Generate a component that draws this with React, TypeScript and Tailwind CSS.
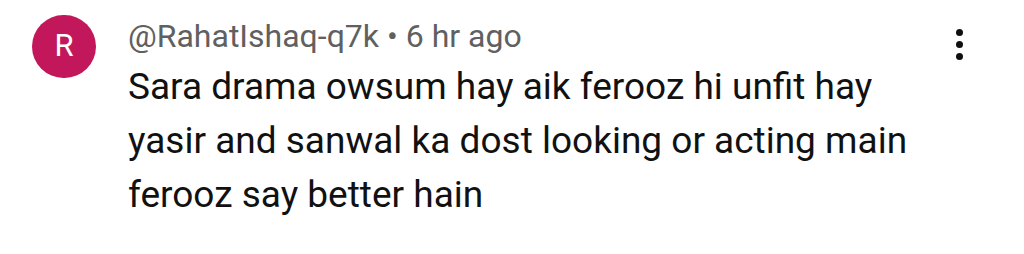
import React from "react";

export default function App() {
  return (
    <div className="w-[1024px] h-[254px] bg-white flex items-start pl-[32px] pt-[15px] pr-[61px]" style={{ fontFamily: "Roboto, sans-serif" }}>
      <div className="w-[64px] h-[63px] rounded-full bg-[#c2185b] flex items-center justify-center text-white text-[31px] shrink-0">R</div>
      <div className="flex-1 ml-[32px] mt-[2px]">
        <div className="text-[32px] leading-[38px] text-[#606060]">@RahatIshaq-q7k • 6 hr ago</div>
        <div className="text-[37px] leading-[54px] text-[#111111] mt-[5px]">
          Sara drama owsum hay aik ferooz hi unfit hay<br />
          yasir and sanwal ka dost looking or acting main<br />
          ferooz say better hain
        </div>
      </div>
      <div className="flex flex-col items-center gap-[5px] mt-[14px]">
        <span className="w-[7px] h-[7px] rounded-full bg-[#0f0f0f]" />
        <span className="w-[7px] h-[7px] rounded-full bg-[#0f0f0f]" />
        <span className="w-[7px] h-[7px] rounded-full bg-[#0f0f0f]" />
      </div>
    </div>
  );
}
